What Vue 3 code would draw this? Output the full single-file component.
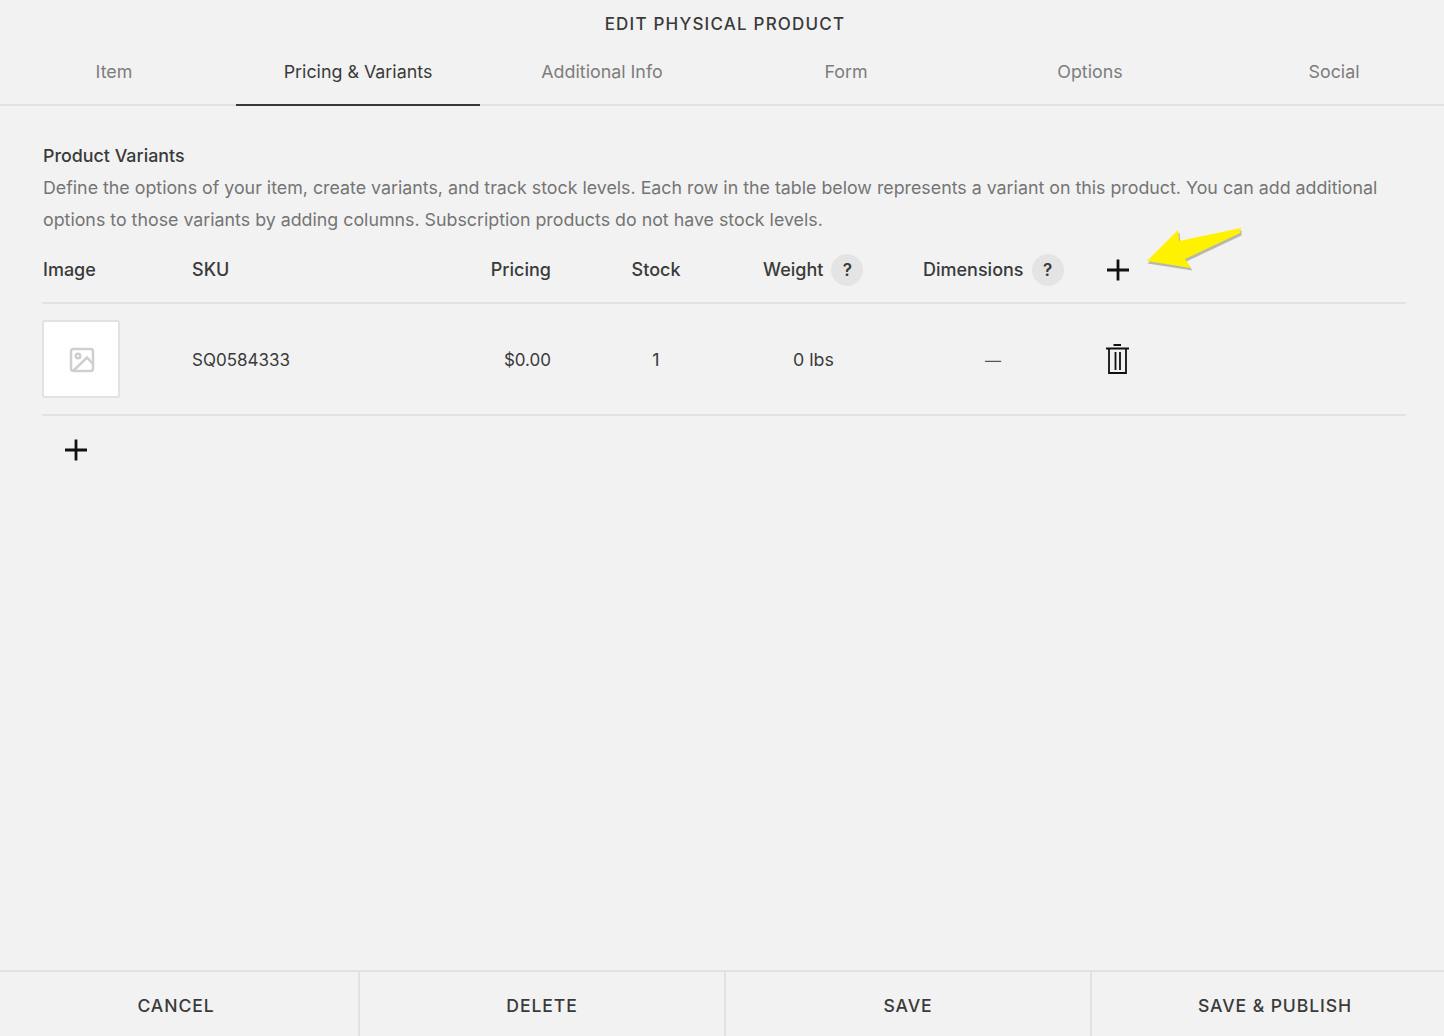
<script setup>
const tabs = ['Item', 'Pricing & Variants', 'Additional Info', 'Form', 'Options', 'Social']
const actions = ['CANCEL', 'DELETE', 'SAVE', 'SAVE & PUBLISH']
</script>

<template>
  <div class="page">
    <h1 class="title">EDIT PHYSICAL PRODUCT</h1>
    <nav class="tabs">
      <a v-for="(t, i) in tabs" :key="t" class="tab" :class="{ active: i === 1 }">{{ t }}</a>
    </nav>
    <main class="content">
      <h2 class="heading">Product Variants</h2>
      <p class="desc">Define the options of your item, create variants, and track stock levels. Each row in the table below represents a variant on this product. You can add additional options to those variants by adding columns. Subscription products do not have stock levels.</p>
      <div class="grid head">
        <div class="first">Image</div>
        <div class="first">SKU</div>
        <div class="right">Pricing</div>
        <div class="stock">Stock</div>
        <div class="weight with-help">Weight <span class="help">?</span></div>
        <div class="dims with-help">Dimensions <span class="help">?</span></div>
        <div class="action">
          <svg class="plus" width="24" height="24" viewBox="0 0 24 24"><path d="M12 1.500v21M1 12h22" stroke="#111" stroke-width="2.800" fill="none"/></svg>
          <svg class="arrow" width="100" height="44" viewBox="0 0 100 44">
            <polygon points="1,33 33,2 34,13 95,0 95,5 40,31 46,40" fill="#8a8a70" opacity=".55" transform="translate(0.5,1.5)"/>
            <polygon points="1,32 32,1 33,12 95,-1 94,4 39,30 45,39" fill="#fff200"/>
          </svg>
        </div>
      </div>
      <div class="grid row">
        <div><div class="thumb">
          <svg width="26" height="26" viewBox="0 0 26 26" fill="none" stroke="#cfcfcf" stroke-width="2.500">
            <rect x="2" y="2" width="22" height="22" rx="2.500"/>
            <circle cx="9" cy="9" r="2.300"/>
            <path d="M4 24 L18 10.500 L24.500 17.500"/>
          </svg>
        </div></div>
        <div class="first cell tight">SQ0584333</div>
        <div class="right cell tight">$0.00</div>
        <div class="stock cell">1</div>
        <div class="weight center cell">0 lbs</div>
        <div class="dims center cell dash">—</div>
        <div class="action">
          <svg class="trash" width="24" height="32" viewBox="0 0 24 32" fill="none" stroke="#111" stroke-width="1.800">
            <path d="M7.500 2h7.500M0 5.500h23M3 5.500V30h17V5.500M9.500 9v18M14 9v18"/>
          </svg>
        </div>
      </div>
      <div class="add">
        <svg width="24" height="24" viewBox="0 0 24 24"><path d="M12 1.500v21M1 12h22" stroke="#111" stroke-width="2.800" fill="none"/></svg>
      </div>
    </main>
    <footer class="footer">
      <button v-for="a in actions" :key="a" class="btn">{{ a }}</button>
    </footer>
  </div>
</template>

<style>
html, body { margin: 0; background: #f2f2f2; }
</style>

<style scoped>
.page {
  width: 1444px;
  height: 1036px;
  background: #f2f2f2;
  display: flex;
  flex-direction: column;
  overflow: hidden;
  font-family: Inter, "Liberation Sans", sans-serif;
  color: #3a3a3a;
}
.title {
  margin: 0;
  height: 48px;
  padding-left: 6px;
  line-height: 48px;
  text-align: center;
  font-size: 17px;
  font-weight: 500;
  letter-spacing: 1.2px;
}
.tabs {
  display: grid;
  grid-template-columns: repeat(6, 244px);
  margin-left: -8px;
  width: 1464px;
  height: 58px;
  box-sizing: border-box;
  border-bottom: 2px solid #e2e2e2;
}
.tab {
  height: 58px;
  box-sizing: border-box;
  padding-top: 14px;
  line-height: 20px;
  text-align: center;
  font-size: 17.850px;
  color: #7d7d7d;
}
.tab.active {
  color: #3a3a3a;
  border-bottom: 2px solid #3a3a3a;
}
.content {
  flex: 1;
  padding: 0 38px 0 42px;
}
.heading {
  margin: 40px 0 0;
  padding-left: 1px;
  font-size: 17.850px;
  font-weight: 500;
  line-height: 20px;
}
.desc {
  margin: 6px 0 0;
  padding-left: 1px;
  font-size: 17.810px;
  line-height: 32px;
  color: #757575;
}
.grid {
  display: grid;
  grid-template-columns: 149px 250px 110px 160px 153px 199px 1fr;
  align-items: center;
  font-size: 17.850px;
}
.head {
  height: 68px;
  box-sizing: border-box;
  border-bottom: 2px solid #e2e2e2;
  font-size: 18px;
  font-weight: 500;
  padding-top: 1px;
}
.row {
  height: 112px;
  box-sizing: border-box;
  border-bottom: 2px solid #e2e2e2;
}
.cell { padding-top: 1px; }
.tight { font-size: 17px; }
.dash { font-size: 16px; color: #555; }
.first { padding-left: 1px; }
.right { text-align: right; }
.stock { padding-left: 50px; text-align: center; }
.weight { padding-left: 52px; white-space: nowrap; }
.dims { padding-left: 59px; white-space: nowrap; }
.with-help {
  display: flex;
  align-items: center;
  gap: 8px;
}
.center { text-align: center; }
.help {
  flex: none;
  width: 32px;
  height: 32px;
  margin-top: 1px;
  border-radius: 50%;
  background: #e4e4e4;
  text-align: center;
  line-height: 32px;
  font-weight: 600;
  font-size: 17px;
}
.action {
  position: relative;
  padding-left: 43px;
  display: flex;
  align-items: center;
}
.plus { margin-top: 1px; }
.arrow {
  position: absolute;
  left: 83px;
  top: -28px;
  overflow: visible;
}
.thumb {
  width: 78px;
  height: 78px;
  box-sizing: border-box;
  padding: 2px 0 0 2px;
  background: #fff;
  border: 2px solid #e2e2e2;
  border-radius: 3px;
  display: flex;
  align-items: center;
  justify-content: center;
}
.add {
  padding: 22px 0 0 22px;
  display: flex;
}
.footer {
  display: grid;
  grid-template-columns: repeat(4, 366px);
  margin-left: -6px;
  height: 66px;
  box-sizing: border-box;
  border-top: 2px solid #e2e2e2;
}
.btn {
  background: none;
  border: none;
  border-right: 2px solid #e2e2e2;
  padding: 2px 0 0;
  font-family: inherit;
  font-size: 17.600px;
  font-weight: 500;
  letter-spacing: 0.9px;
  color: #3a3a3a;
}
.btn:last-child { border-right: none; }
</style>
